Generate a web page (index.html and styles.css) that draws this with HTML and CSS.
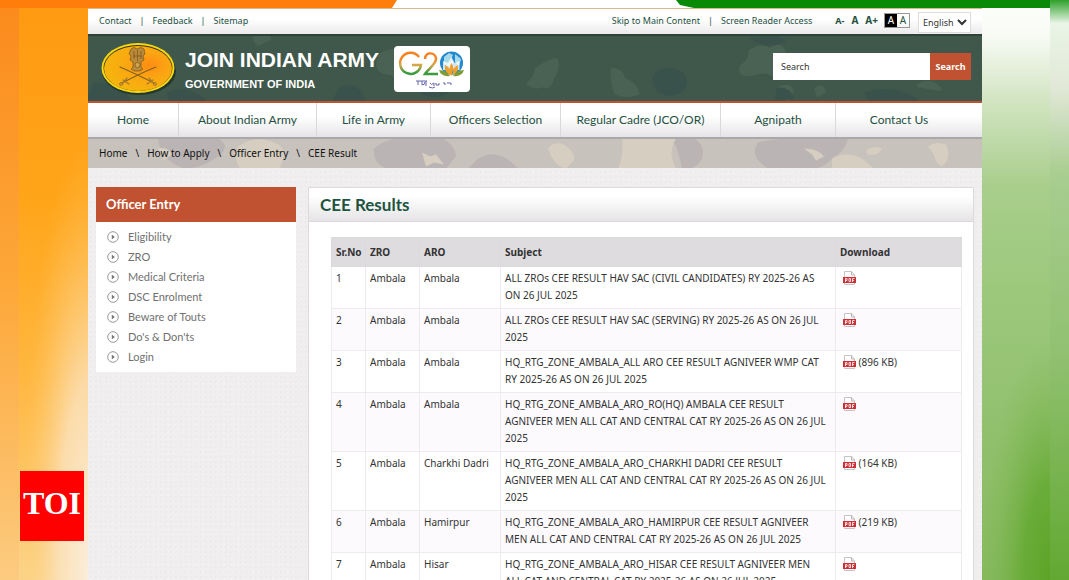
FILE: index.html
```html
<!DOCTYPE html>
<html lang="en">
<head>
    <meta charset="UTF-8">
    <meta name="viewport" content="width=device-width, initial-scale=1.0">
    <title>CEE Results</title>
    <link rel="stylesheet" href="styles.css">
</head>
<body>

    <!-- Tricolour backdrop -->
    <svg class="backdrop" viewBox="0 0 1069 580" preserveAspectRatio="none" aria-hidden="true">
        <defs>
            <linearGradient id="saffron" x1="0" y1="0" x2="0" y2="1">
                <stop offset="0" stop-color="#ff9a12"/>
                <stop offset="0.35" stop-color="#ffa51a"/>
                <stop offset="0.65" stop-color="#ffb740"/>
                <stop offset="1" stop-color="#fbd48a"/>
            </linearGradient>
            <linearGradient id="saffronEdge" x1="0" y1="0" x2="0" y2="1">
                <stop offset="0" stop-color="#fb8a1c"/>
                <stop offset="0.5" stop-color="#fda83a"/>
                <stop offset="1" stop-color="#fccb80"/>
            </linearGradient>
            <radialGradient id="cream" cx="1" cy="1" r="1">
                <stop offset="0" stop-color="#fbeedd"/>
                <stop offset="0.45" stop-color="#fbe3bf" stop-opacity="0.8"/>
                <stop offset="1" stop-color="#ffc45c" stop-opacity="0"/>
            </radialGradient>
            <linearGradient id="green" x1="0" y1="0" x2="0" y2="1">
                <stop offset="0" stop-color="#fdfefc"/>
                <stop offset="0.06" stop-color="#f8fbf5"/>
                <stop offset="0.17" stop-color="#d3e5c3"/>
                <stop offset="0.32" stop-color="#a9ce8c"/>
                <stop offset="0.5" stop-color="#9cc87c"/>
                <stop offset="1" stop-color="#86b95e"/>
            </linearGradient>
            <radialGradient id="leaf" cx="1" cy="1" r="1">
                <stop offset="0" stop-color="#5ca426"/>
                <stop offset="0.4" stop-color="#62a82e" stop-opacity="0.8"/>
                <stop offset="1" stop-color="#7fb654" stop-opacity="0"/>
            </radialGradient>
            <linearGradient id="greenEdge" x1="0" y1="0" x2="0" y2="1">
                <stop offset="0" stop-color="#2fa02c"/>
                <stop offset="0.04" stop-color="#e9f5e6"/>
                <stop offset="0.15" stop-color="#e2e8d8"/>
                <stop offset="0.3" stop-color="#a8cd90"/>
                <stop offset="0.6" stop-color="#92c172"/>
                <stop offset="1" stop-color="#62a832"/>
            </linearGradient>
        </defs>
        <rect width="1069" height="580" fill="#fff"/>
        <rect width="90" height="580" fill="url(#saffron)"/>
        <rect x="19" y="140" width="70" height="440" fill="url(#cream)"/>
        <rect width="19" height="580" fill="url(#saffronEdge)"/>
        <rect x="980" width="89" height="580" fill="url(#green)"/>
        <rect x="982" y="340" width="68" height="240" fill="url(#leaf)"/>
        <path d="M0 0H397L392 8H0z" fill="#ff7d0a"/>
        <path d="M676 0H1069V8H694L680 5z" fill="#088a06"/>
        <rect x="1050" width="19" height="580" fill="url(#greenEdge)"/>
    </svg>

    <!-- Shared bullet icon -->
    <svg class="sprite" aria-hidden="true">
        <symbol id="bullet" viewBox="0 0 12 12">
            <circle cx="6" cy="6" r="5.300" fill="none" stroke="#9a9a9a"/>
            <path d="M4.800 3.500L7.800 6L4.800 8.500z" fill="#777"/>
        </symbol>
    </svg>

    <div class="page">
        <div class="topbar">
            <nav class="top-links">
                <a href="#">Contact</a>
                <a href="#">Feedback</a>
                <a href="#">Sitemap</a>
            </nav>
            <div class="tools">
                <nav class="top-links">
                    <a href="#main">Skip to Main Content</a>
                    <a href="#">Screen Reader Access</a>
                </nav>
                <div class="text-size">
                    <button type="button" class="size-small">A-</button>
                    <button type="button">A</button>
                    <button type="button">A+</button>
                </div>
                <div class="contrast">
                    <button type="button" class="dark" aria-label="High contrast">A</button>
                    <button type="button" aria-label="Normal contrast">A</button>
                </div>
                <select class="language" aria-label="Language">
                    <option>English</option>
                    <option>Hindi</option>
                </select>
            </div>
        </div>

        <header class="header">
            <svg class="camo" viewBox="0 0 894 66" preserveAspectRatio="xMidYMid slice" aria-hidden="true">
                <g fill="#4a6253" stroke="#4a6253" stroke-width="3" stroke-linejoin="round">
                    <path d="M166 3q8-5 16 0l-12 6zM292 20q14-10 26 0 20-6 20 8 6 10-12 12-14 8-22-2-20 0-12-18zM662 16q10-8 20-2 10-8 14 2 4 12-6 14 6 10-4 10-10-6-18-2-20 4-14-8 8-4 8-14z"/>
                    <path d="M524 34q10 0 12 10 12 4 14 14-14 4-22 0-4-10-4-24zM692 52q10-4 12 4l-4 8zM728 54q6-6 8 2l-6 4zM830 50q14-8 22 4l-12-2zM448 34q10-8 20-10 4 8-4 20-2 10-10 6-6 4-14-2 8-6 8-14z"/>
                </g>
                <g fill="#39534c" stroke="#39534c" stroke-width="3" stroke-linejoin="round">
                    <path d="M568 38q14-8 26 0 8 10-2 18-10 6-20 0-10-8-4-18zM664 3q20-4 32 2-14 8-32-2zM690 54q10-2 14 8l-16 2zM332 50q14-4 30 4-8 10-26 4zM6 48q16 0 28 8l8 8H0z"/>
                    <path d="M80 58q16-8 36 6H82zM252 54q14-10 24 10h-30zM778 58q26-8 50 6h-46z"/>
                </g>
            </svg>
            <a class="brand" href="#">
                <svg class="emblem" viewBox="0 0 76 54" aria-hidden="true">
                    <defs>
                        <radialGradient id="gold" cx="0.66" cy="0.42" r="0.7">
                            <stop offset="0" stop-color="#ff8c14"/>
                            <stop offset="0.4" stop-color="#fba512"/>
                            <stop offset="1" stop-color="#f4b70c"/>
                        </radialGradient>
                    </defs>
                    <ellipse cx="38" cy="29" rx="37" ry="24" fill="#1b2b25" opacity="0.7"/>
                    <ellipse cx="37" cy="26" rx="36.500" ry="25" fill="#f4d813"/>
                    <ellipse cx="37" cy="26" rx="34.500" ry="23" fill="#3d3208"/>
                    <ellipse cx="37" cy="26.500" rx="34" ry="22.500" fill="url(#gold)"/>
                    <g fill="#b98a3a" stroke="#7a5518" stroke-width="0.700">
                        <path d="M30 7q3-3 6 0 4-3 7 0l1 5-2 2 1 4-3 2v5l2 2-3 2h-6l-3-2 2-2v-5l-3-2 1-4-2-2z"/>
                        <circle cx="36.500" cy="23" r="2.500" fill="#d0a850"/>
                        <path d="M33 9v8M40 9v8M36.500 8v11M32 14h9" fill="none"/>
                    </g>
                    <g fill="none" stroke="#86601f" stroke-width="1.200" stroke-linecap="round">
                        <path d="M19 25q14 6 34 16M55 25q-15 6-34 16"/>
                        <path d="M46 42l6-4M48 36l5 6M28 42l-6-4M26 36l-5 6" stroke="#a5782c"/>
                    </g>
                    <g fill="#d29b35" stroke="#86601f" stroke-width="0.600">
                        <circle cx="54" cy="42" r="1.500"/>
                        <circle cx="20" cy="42" r="1.500"/>
                    </g>
                </svg>
                <span class="brand-text">
                    <span class="brand-name">JOIN INDIAN ARMY</span>
                    <span class="brand-sub">GOVERNMENT OF INDIA</span>
                </span>
            </a>
            <svg class="g20" viewBox="0 0 76 46" role="img" aria-label="G20">
                <defs>
                    <linearGradient id="flag" gradientUnits="userSpaceOnUse" x1="0" y1="6" x2="0" y2="30">
                        <stop offset="0.25" stop-color="#f5821f"/>
                        <stop offset="0.55" stop-color="#d4a84a"/>
                        <stop offset="0.85" stop-color="#3c9a3f"/>
                    </linearGradient>
                </defs>
                <rect width="76" height="46" rx="4" fill="#fff"/>
                <g fill="none" stroke="url(#flag)" stroke-width="2.500">
                    <path d="M25 11A10.500 10.500 0 1 0 27 19H18"/>
                    <path d="M31 13C31 5 42 6 42 13C42 18 35 22 31 28H44"/>
                </g>
                <circle cx="57.500" cy="17" r="11.500" fill="#2288cf"/>
                <path d="M50 11l5-4 4 2-2 4 3 3-4 5-6-3zM61 8l6 5-2 7-4-4z" fill="#a8dbe9"/>
                <path d="M57.500 11l3 6 5-2v9H49v-9l5 2z" fill="#fff" opacity="0.800"/>
                <path d="M57.500 17q4 6 0 13-4-7 0-13M51 19q6 3 6 10-7-2-6-10M64 19q-6 3-6 10 7-2 6-10" fill="#f0a02c"/>
                <path d="M45 24q7 0 11 6-9 1-11-6M70 24q-7 0-11 6 9 1 11-6" fill="#7d9c34"/>
                <path d="M22 35h11M24 35v4M28 35v4q3 0 3-3M32 35v5M36 37q1 3 4 0v3M42 37v2h3v-2M49 37h2v2M53 37h4v2M35 41q4 2 6 0" fill="none" stroke="#6465a8"/>
            </svg>
            <form class="search" role="search">
                <input type="text" placeholder="Search" aria-label="Search">
                <button type="button">Search</button>
            </form>
        </header>

        <nav class="menu">
            <a href="#">Home</a>
            <a href="#">About Indian Army</a>
            <a href="#">Life in Army</a>
            <a href="#">Officers Selection</a>
            <a href="#">Regular Cadre (JCO/OR)</a>
            <a href="#">Agnipath</a>
            <a href="#">Contact Us</a>
        </nav>

        <nav class="breadcrumb" aria-label="Breadcrumb">
            <svg class="camo" viewBox="0 0 894 30" preserveAspectRatio="xMidYMid slice" aria-hidden="true">
                <g fill="#bbb4b4">
                    <path d="M70 0h60q14 8 0 18-16 12-34 12-24-8-26-30zM286 10q14-12 34-10h34q14 6 14 18l-10 12h-60q-14-6-12-20zM670 4q20-6 90-4-2 12-16 20-8 10-20 10h-44q-20-12-10-26zM584 0h22q12 6 8 20-6 12-20 10-4-20-10-30zM390 20q20-12 40 10h-50z"/>
                </g>
                <g fill="#d6cec0">
                    <path d="M150 8q14-10 30-6 16 4 16 14l-4 14h-40q-8-14-2-22zM534 0h54q-6 10-4 20l4 10h-58q6-14 4-30zM460 10q6-8 16-4 12 8 10 16l-8 8q-12-2-18-20zM744 20q14-8 30 0l12 10h-42zM840 8q8-6 18-2 6 14-4 22-6-2-8-12z"/>
                    <path d="M334 14l8 4 6-2 8 10-10-2-8 4zM716 10q14 0 20 8l-8 4-4-6zM778 12q8-6 16-2-4 8-14 6zM70 10q10-2 14 6l-8 6z"/>
                </g>
            </svg>
            <a href="#">Home</a>
            <a href="#">How to Apply</a>
            <a href="#">Officer Entry</a>
            <a href="#" aria-current="page">CEE Result</a>
        </nav>

        <div class="content">
            <aside class="sidebar">
                <h2>Officer Entry</h2>
                <ul>
                    <li><svg><use href="#bullet"/></svg><a href="#">Eligibility</a></li>
                    <li><svg><use href="#bullet"/></svg><a href="#">ZRO</a></li>
                    <li><svg><use href="#bullet"/></svg><a href="#">Medical Criteria</a></li>
                    <li><svg><use href="#bullet"/></svg><a href="#">DSC Enrolment</a></li>
                    <li><svg><use href="#bullet"/></svg><a href="#">Beware of Touts</a></li>
                    <li><svg><use href="#bullet"/></svg><a href="#">Do's &amp; Don'ts</a></li>
                    <li><svg><use href="#bullet"/></svg><a href="#">Login</a></li>
                </ul>
            </aside>

            <main class="panel" id="main">
                <h1>CEE Results</h1>
                <table class="results">
                    <thead>
                        <tr>
                            <th class="col-no">Sr.No</th>
                            <th class="col-zro">ZRO</th>
                            <th class="col-aro">ARO</th>
                            <th>Subject</th>
                            <th class="col-file">Download</th>
                        </tr>
                    </thead>
                    <tbody id="resultRows"></tbody>
                </table>
            </main>
        </div>
    </div>

    <div class="toi">TOI</div>

    <script>
        const results = [
            { aro: 'Ambala', subject: 'ALL ZROs CEE RESULT HAV SAC (CIVIL CANDIDATES) RY 2025-26 AS ON 26 JUL 2025', size: '' },
            { aro: 'Ambala', subject: 'ALL ZROs CEE RESULT HAV SAC (SERVING) RY 2025-26 AS ON 26 JUL 2025', size: '' },
            { aro: 'Ambala', subject: 'HQ_RTG_ZONE_AMBALA_ALL ARO CEE RESULT AGNIVEER WMP CAT RY 2025-26 AS ON 26 JUL 2025', size: '(896 KB)' },
            { aro: 'Ambala', subject: 'HQ_RTG_ZONE_AMBALA_ARO_RO(HQ) AMBALA CEE RESULT AGNIVEER MEN ALL CAT AND CENTRAL CAT RY 2025-26 AS ON 26 JUL 2025', size: '' },
            { aro: 'Charkhi Dadri', subject: 'HQ_RTG_ZONE_AMBALA_ARO_CHARKHI DADRI CEE RESULT AGNIVEER MEN ALL CAT AND CENTRAL CAT RY 2025-26 AS ON 26 JUL 2025', size: '(164 KB)' },
            { aro: 'Hamirpur', subject: 'HQ_RTG_ZONE_AMBALA_ARO_HAMIRPUR CEE RESULT AGNIVEER MEN ALL CAT AND CENTRAL CAT RY 2025-26 AS ON 26 JUL 2025', size: '(219 KB)' },
            { aro: 'Hisar', subject: 'HQ_RTG_ZONE_AMBALA_ARO_HISAR CEE RESULT AGNIVEER MEN ALL CAT AND CENTRAL CAT RY 2025-26 AS ON 26 JUL 2025', size: '' }
        ];

        const pdfIcon = `<svg class="pdf" viewBox="0 0 13 14" aria-hidden="true">
            <path d="M1.500 13.500V.5H8.500L11.500 4V13.500z" fill="#fff" stroke="#c4c4c4"/>
            <path d="M8.500 .5V4H11.500" fill="none" stroke="#b5b5b5"/>
            <path d="M0 6H13V12H0z" fill="#cf3038"/>
            <path d="M2.500 11V7.500H4V9.500H2.500M6 7.500V10.500H7.500V7.500zM9.500 11V7.500H11.500M9.500 9.500H11" fill="none" stroke="#fff" stroke-width="0.800"/>
        </svg>`;

        // Build one table row per result
        document.getElementById('resultRows').innerHTML = results.map((r, i) => `
            <tr>
                <td>${i + 1}</td>
                <td>Ambala</td>
                <td>${r.aro}</td>
                <td class="subject">${r.subject}</td>
                <td><a href="#" aria-label="Download PDF">${pdfIcon}</a> ${r.size}</td>
            </tr>`).join('');
    </script>

</body>
</html>
```
FILE: styles.css
```css
* {
    box-sizing: border-box;
}
body {
    margin: 0;
    height: 100vh;
    overflow: hidden;
    font-family: "Noto Sans", sans-serif;
    font-size: 10px;
    color: #333;
}
a {
    color: inherit;
    text-decoration: none;
}
button, input, select {
    font-family: inherit;
}
.backdrop {
    position: fixed;
    inset: 0;
    width: 100%;
    height: 100%;
    z-index: -1;
}
.sprite {
    position: absolute;
    width: 0;
    height: 0;
}
.page {
    margin: 8px 87px 0 88px;
    border-top: 1px solid #d9b98c;
    background-color: #f0eeee;
    background-image: radial-gradient(#ebe9e9 1px, transparent 1px), radial-gradient(#f4f2f2 1px, transparent 1px);
    background-size: 5px 5px, 7px 7px;
}

/* Top bar */
.topbar {
    display: flex;
    justify-content: space-between;
    height: 25px;
    padding: 0 11px;
    background: linear-gradient(#fff 40%, #eceaec);
    color: #24503f;
    font-size: 9px;
}
.topbar a {
    line-height: 23px;
}
.tools, .top-links, .text-size, .contrast {
    display: flex;
    align-items: flex-start;
}
.top-links a + a::before {
    content: "|";
    margin: 0 8px;
}
.topbar button {
    padding: 0;
    border: 0;
    background: none;
    color: #24503f;
    font-size: 10px;
    font-weight: bold;
    line-height: 23px;
}
.text-size {
    gap: 7px;
    margin: 0 6px 0 23px;
}
.topbar .size-small {
    font-size: 9px;
}
.contrast {
    margin: 4px 8px 0 0;
    border: 1px solid #999;
}
.topbar .contrast button {
    width: 12px;
    font-weight: normal;
    line-height: 13px;
}
.topbar .contrast .dark {
    background: #000;
    color: #fff;
}
.language {
    width: 53px;
    height: 21px;
    margin-top: 3px;
    border: 1px solid #ddd;
    background: #fff;
    color: #333;
    font-size: 9px;
}

/* Header */
.header {
    position: relative;
    display: flex;
    align-items: center;
    height: 69px;
    padding: 0 11px 0 13px;
    border-top: 2px solid #2c4338;
    border-bottom: 2px solid #c05131;
    background: #3f584b;
}
.camo {
    position: absolute;
    inset: 0;
    width: 100%;
    height: 100%;
}
.brand {
    position: relative;
    display: flex;
    gap: 8px;
    margin-right: 15px;
    color: #fff;
}
.emblem {
    width: 76px;
    height: 54px;
}
.brand-text {
    display: flex;
    flex-direction: column;
    font-family: "Liberation Sans", Arial, sans-serif;
    font-weight: bold;
    white-space: nowrap;
}
.brand-name {
    font-size: 21px;
    line-height: 36px;
}
.brand-sub {
    font-size: 11px;
    line-height: 12px;
}
.g20 {
    position: relative;
    width: 76px;
    height: 46px;
}
.search {
    position: relative;
    display: flex;
    height: 27px;
    margin: 0 0 4px auto;
}
.search input {
    width: 157px;
    padding: 0 8px;
    border: 0;
    font-size: 9px;
}
.search input::placeholder {
    color: #333;
}
.search button {
    width: 41px;
    padding: 0;
    border: 0;
    background: #c05131;
    color: #fff;
    font-size: 9px;
    font-weight: bold;
}

/* Main menu */
.menu {
    display: grid;
    grid-template-columns: 91fr 138fr 114fr 130fr 160fr 115fr 146fr;
    border-bottom: 2px solid #aaa8aa;
    background: linear-gradient(#fff 40%, #e6e4e7);
}
.menu a {
    border-right: 1px solid #dad8da;
    color: #24503f;
    font-family: Lato, sans-serif;
    font-size: 12px;
    line-height: 34px;
    text-align: center;
    white-space: nowrap;
}
.menu a:last-child {
    padding-right: 20px;
    border: 0;
}

/* Breadcrumb */
.breadcrumb {
    position: relative;
    display: flex;
    height: 29px;
    padding: 0 11px;
    background: #c8c2bd;
    color: #111;
    line-height: 28px;
}
.breadcrumb a {
    position: relative;
}
.breadcrumb a + a::before {
    content: "\\";
    margin: 0 8px;
}

/* Content */
.content {
    display: flex;
    gap: 12px;
    padding: 19px 8px 0;
}
.sidebar {
    flex: 0 0 200px;
    align-self: flex-start;
    background: #fff;
}
.sidebar h2 {
    margin: 0;
    padding: 0 10px;
    background: #c05131;
    color: #fff;
    font-family: Lato, sans-serif;
    font-size: 13px;
    line-height: 35px;
}
.sidebar ul {
    margin: 0;
    padding: 5px 11px;
    list-style: none;
}
.sidebar li {
    display: flex;
    align-items: center;
    gap: 9px;
    color: #707070;
    font-family: Lato, sans-serif;
    font-size: 11px;
    line-height: 20px;
}
.sidebar li svg {
    width: 12px;
    height: 12px;
}
.panel {
    flex: 1;
    min-width: 0;
    border: 1px solid #dcdadb;
    background: #fff;
}
.panel h1 {
    margin: 0 0 15px;
    padding: 0 11px;
    border-bottom: 1px solid #dcdadb;
    background: linear-gradient(#fff 25%, #e6e4e6);
    color: #1d5440;
    font-family: Lato, sans-serif;
    font-size: 17px;
    line-height: 33px;
}
.results {
    width: calc(100% - 33px);
    margin-left: 22px;
    border-collapse: collapse;
    table-layout: fixed;
    line-height: 17px;
}
.results th, .results td {
    padding: 3px 4px;
    border: 1px solid #eeebee;
    text-align: left;
    vertical-align: top;
}
.results td {
    padding-bottom: 4px;
}
.results th {
    padding: 6px 4px 5px;
    border-color: #dcd9dd;
    background: #dfdce0;
}
.results .subject {
    padding-right: 8px;
}
.results tbody tr:nth-child(even) {
    background: #fcfafd;
}
.col-no {
    width: 34px;
}
.col-zro {
    width: 54px;
}
.col-aro {
    width: 81px;
}
.col-file {
    width: 126px;
}
.pdf {
    width: 13px;
    height: 14px;
    margin-left: 3px;
    vertical-align: -3px;
}

/* Corner logo */
.toi {
    position: fixed;
    left: 20px;
    bottom: 39px;
    width: 64px;
    height: 70px;
    background: #f00;
    color: #fff;
    font-family: "Liberation Serif", serif;
    font-size: 32px;
    font-weight: bold;
    line-height: 65px;
    text-align: center;
}
```
